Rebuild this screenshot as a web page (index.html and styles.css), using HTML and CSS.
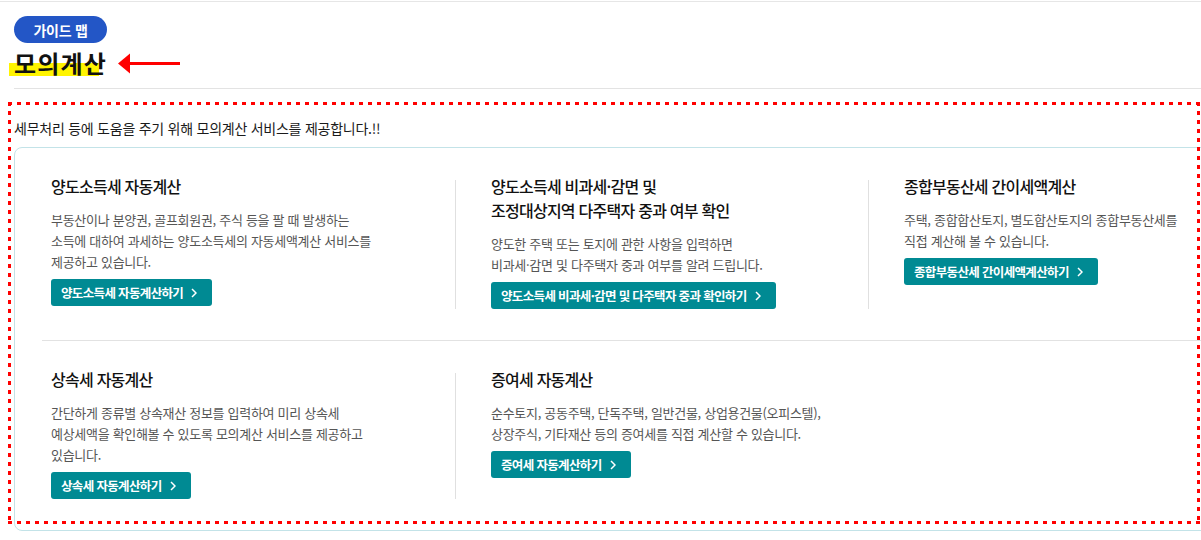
FILE: index.html
```html
<!DOCTYPE html>
<html lang="ko">
<head>
<meta charset="utf-8">
<title>모의계산</title>
<link rel="stylesheet" href="styles.css">
</head>
<body>
<div class="page">
  <div class="inner">
    <header class="head">
      <span class="badge">가이드 맵</span>
      <div class="title-row">
        <h1 class="title"><span class="hl">모의계산</span></h1>
        <svg class="arrow" width="62" height="21" viewBox="0 0 62 21" aria-hidden="true">
          <path d="M0 10.5 L12 0.5 L12 20.5 Z" fill="#ff0000"/>
          <rect x="11" y="9" width="51" height="3" fill="#ff0000"/>
        </svg>
      </div>
    </header>

    <section class="calc">
      <p class="intro">세무처리 등에 도움을 주기 위해 모의계산 서비스를 제공합니다.!!</p>
      <div class="card">
        <div class="row">
          <div class="item">
            <h3 class="item-title">양도소득세 자동계산</h3>
            <p class="item-desc">부동산이나 분양권, 골프회원권, 주식 등을 팔 때 발생하는<br>소득에 대하여 과세하는 양도소득세의 자동세액계산 서비스를<br>제공하고 있습니다.</p>
            <a class="btn" href="#">양도소득세 자동계산하기<svg class="chev" width="6" height="10" viewBox="0 0 6 10"><polyline points="1,1 5,5 1,9" fill="none" stroke="#fff" stroke-width="1.5"/></svg></a>
          </div>
          <div class="item">
            <h3 class="item-title">양도소득세 비과세·감면 및<br>조정대상지역 다주택자 중과 여부 확인</h3>
            <p class="item-desc">양도한 주택 또는 토지에 관한 사항을 입력하면<br>비과세·감면 및 다주택자 중과 여부를 알려 드립니다.</p>
            <a class="btn" href="#">양도소득세 비과세·감면 및 다주택자 중과 확인하기<svg class="chev" width="6" height="10" viewBox="0 0 6 10"><polyline points="1,1 5,5 1,9" fill="none" stroke="#fff" stroke-width="1.5"/></svg></a>
          </div>
          <div class="item">
            <h3 class="item-title">종합부동산세 간이세액계산</h3>
            <p class="item-desc">주택, 종합합산토지, 별도합산토지의 종합부동산세를<br>직접 계산해 볼 수 있습니다.</p>
            <a class="btn" href="#">종합부동산세 간이세액계산하기<svg class="chev" width="6" height="10" viewBox="0 0 6 10"><polyline points="1,1 5,5 1,9" fill="none" stroke="#fff" stroke-width="1.5"/></svg></a>
          </div>
        </div>
        <div class="row">
          <div class="item">
            <h3 class="item-title">상속세 자동계산</h3>
            <p class="item-desc">간단하게 종류별 상속재산 정보를 입력하여 미리 상속세<br>예상세액을 확인해볼 수 있도록 모의계산 서비스를 제공하고<br>있습니다.</p>
            <a class="btn" href="#">상속세 자동계산하기<svg class="chev" width="6" height="10" viewBox="0 0 6 10"><polyline points="1,1 5,5 1,9" fill="none" stroke="#fff" stroke-width="1.5"/></svg></a>
          </div>
          <div class="item">
            <h3 class="item-title">증여세 자동계산</h3>
            <p class="item-desc">순수토지, 공동주택, 단독주택, 일반건물, 상업용건물(오피스텔),<br>상장주식, 기타재산 등의 증여세를 직접 계산할 수 있습니다.</p>
            <a class="btn" href="#">증여세 자동계산하기<svg class="chev" width="6" height="10" viewBox="0 0 6 10"><polyline points="1,1 5,5 1,9" fill="none" stroke="#fff" stroke-width="1.5"/></svg></a>
          </div>
        </div>
      </div>
    </section>
  </div>
  <div class="focus-box" aria-hidden="true"></div>
</div>
</body>
</html>
```

FILE: styles.css
```css
html, body {
  margin: 0;
  padding: 0;
  background: #ffffff;
}

body {
  font-family: "Noto Sans CJK KR", "Noto Sans", sans-serif;
  color: #111111;
}

.page {
  position: relative;
  width: 100%;
  overflow: hidden;
  margin-top: 1px;
  border-top: 1px solid #e6e6e6;
  height: 539px;
  box-sizing: border-box;
}

.inner {
  width: 1320px;
  padding-left: 14px;
  box-sizing: border-box;
}

.head {
  padding-top: 14px;
  padding-bottom: 10px;
  border-bottom: 1px solid #e3e3e3;
}

.badge {
  display: inline-flex;
  align-items: center;
  justify-content: center;
  width: 93px;
  height: 27px;
  border-radius: 14px;
  background: #2356c6;
  color: #ffffff;
  font-size: 14px;
  font-weight: 700;
  letter-spacing: -0.3px;
}

.title-row {
  display: flex;
  align-items: center;
  height: 30px;
  margin-top: 5px;
}

.title {
  margin: 0;
  font-size: 24px;
  line-height: 30px;
  font-weight: 700;
  letter-spacing: 1.2px;
  color: #111111;
}

.hl {
  position: relative;
  isolation: isolate;
  display: inline-block;
}

.hl::before {
  content: "";
  position: absolute;
  left: -5px;
  top: 15px;
  width: 90px;
  height: 13px;
  background: #fff400;
  z-index: -1;
}

.arrow {
  display: block;
  margin-left: 11px;
}

.calc {
  padding-top: 29px;
}

.intro {
  margin: 0;
  font-size: 14px;
  line-height: 20px;
  letter-spacing: -0.25px;
  color: #1a1a1a;
}

.card {
  margin-top: 9px;
  border: 1px solid #c3e3e8;
  border-radius: 8px;
  padding-left: 27px;
  background: #ffffff;
}

.row {
  display: grid;
  grid-template-columns: 413px 413px 413px;
  padding: 32px 0 31px;
}

.row + .row {
  border-top: 1px solid #e2e2e2;
}

.item {
  display: flex;
  flex-direction: column;
  align-items: flex-start;
  border-left: 1px solid #e0e0e0;
  padding-left: 35px;
}

.item:first-child {
  border-left: none;
  padding-left: 9px;
}

.item-title {
  margin: -6px 0 11px;
  font-size: 16px;
  line-height: 24px;
  font-weight: 500;
  letter-spacing: -0.75px;
  color: #111111;
}

.item-desc {
  margin: 0;
  font-size: 13px;
  line-height: 21px;
  letter-spacing: -0.3px;
  color: #555555;
}

.btn {
  display: inline-flex;
  align-items: center;
  height: 27px;
  margin-top: 7px;
  padding: 0 15px 0 10px;
  border-radius: 3px;
  background: #008a93;
  color: #ffffff;
  font-size: 12.5px;
  font-weight: 700;
  letter-spacing: -0.65px;
  text-decoration: none;
  white-space: nowrap;
}

.chev {
  display: block;
  margin-left: 8px;
}

.focus-box {
  position: absolute;
  left: 8px;
  top: 100px;
  width: 1192px;
  height: 422px;
  pointer-events: none;
  background:
    repeating-linear-gradient(90deg, #ff0000 0 4px, transparent 4px 9px) left top / 100% 3px no-repeat,
    repeating-linear-gradient(90deg, #ff0000 0 4px, transparent 4px 9px) left bottom / 100% 3px no-repeat,
    repeating-linear-gradient(180deg, #ff0000 0 4px, transparent 4px 9px) left top / 3px 100% no-repeat,
    repeating-linear-gradient(180deg, #ff0000 0 4px, transparent 4px 9px) right top / 3px 100% no-repeat;
}
```
